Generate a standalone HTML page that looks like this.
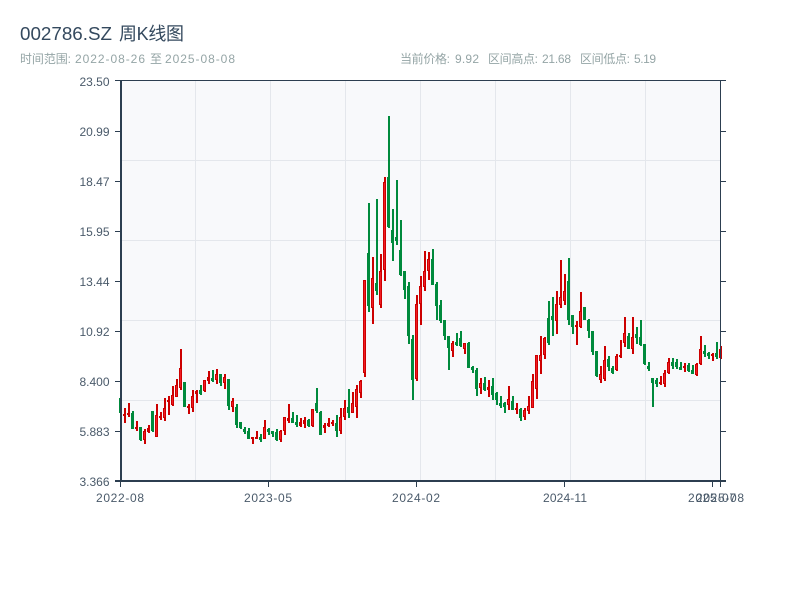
<!DOCTYPE html>
<html><head><meta charset="utf-8"><style>
html,body{margin:0;padding:0;background:#fff;width:800px;height:600px;overflow:hidden}
svg{display:block}
text{font-family:"Liberation Sans","Noto Sans CJK SC",sans-serif}
</style></head><body>
<svg width="800" height="600" viewBox="0 0 800 600" xmlns="http://www.w3.org/2000/svg">
<rect width="800" height="600" fill="#fff"/>
<g font-size="18" fill="#34495e">
<text x="20" y="40" textLength="92" lengthAdjust="spacingAndGlyphs">002786.SZ</text>
<text x="119" y="40" textLength="65">周K线图</text>
</g>
<g font-size="12" fill="#95a5a6">
<text x="20" y="63" textLength="51">时间范围:</text>
<text x="75" y="63" textLength="70">2022-08-26</text>
<text x="150" y="63">至</text>
<text x="165" y="63" textLength="70">2025-08-08</text>
<text x="400" y="63" textLength="50">当前价格:</text>
<text x="455" y="63" textLength="24">9.92</text>
<text x="488" y="63" textLength="50">区间高点:</text>
<text x="542" y="63" textLength="29">21.68</text>
<text x="580" y="63" textLength="50">区间低点:</text>
<text x="634" y="63" textLength="22">5.19</text>
</g>
<rect x="121" y="81" width="600" height="400" fill="#f8f9fb"/>
<g shape-rendering="crispEdges">
<path fill="#e4e7ec" d="M195 81h1v400h-1zM270 81h1v400h-1zM345 81h1v400h-1zM420 81h1v400h-1zM495 81h1v400h-1zM570 81h1v400h-1zM645 81h1v400h-1zM121 160h600v1h-600zM121 240h600v1h-600zM121 320h600v1h-600zM121 400h600v1h-600z"/>
<g fill="none">
<path stroke="#008a3c" stroke-width="2" d="M121 398V413M133 411V429M141 427V441M153 411V432M185 382V407M201 385V395M213 370V382M221 374V386M229 379V410M237 404V428M241 422V429M245 427V434M249 428V439M261 434V442M269 428V435M273 431V437M277 429V441M293 412V423M297 415V427M309 419V427M317 388V413M321 411V435M337 415V437M349 389V418M369 203V312M377 199V295M389 116V228M393 209V261M397 180V245M401 220V276M405 271V299M409 282V344M413 335V400M433 249V285M437 282V320M441 300V323M445 320V340M449 336V370M457 333V346M461 331V347M469 342V368M473 366V373M477 368V396M485 377V391M493 378V400M497 392V405M501 396V408M505 402V413M513 396V410M521 408V421M549 301V345M553 297V336M569 258V325M573 315V334M585 307V320M589 319V338M593 331V355M597 351V377M609 356V371M613 366V374M629 333V349M637 327V344M641 320V346M645 344V365M649 362V371M653 378V407M657 378V387M673 358V369M677 359V369M681 362V370M689 363V372M693 365V374M705 345V357M709 352V359M717 342V359"/>
<path stroke="#008a3c" stroke-width="3" d="M120.5 398V413M132.5 413V429M140.5 427V440M152.5 411V431M184.5 382V407M200.5 390V394M212.5 378V381M220.5 374V383M228.5 379V406M236.5 407V425M240.5 422V428M244.5 429V432M248.5 431V439M260.5 437V440M268.5 429V432M272.5 431V434M276.5 432V440M292.5 418V423M296.5 422V425M308.5 420V426M316.5 403V411M320.5 412V435M336.5 423V431M348.5 407V413M368.5 253V306M376.5 283V291M388.5 177V227M392.5 230V243M396.5 237V241M400.5 250V275M404.5 271V290M408.5 286V336M412.5 339V380M432.5 259V285M436.5 284V306M440.5 305V321M444.5 320V336M448.5 336V348M456.5 342V345M460.5 338V346M468.5 343V368M472.5 367V370M476.5 370V389M484.5 383V390M492.5 386V395M496.5 393V400M500.5 403V406M504.5 403V407M512.5 401V410M520.5 409V418M548.5 318V343M552.5 316V320M568.5 281V320M572.5 315V327M584.5 307V320M588.5 320V331M592.5 331V352M596.5 351V376M608.5 359V367M612.5 368V373M628.5 336V349M636.5 334V338M640.5 337V345M644.5 344V364M648.5 366V369M652.5 378V383M656.5 380V384M672.5 362V366M676.5 362V367M680.5 367V370M688.5 365V371M692.5 370V374M704.5 351V354M708.5 353V356M716.5 353V357"/>
<path stroke="#cc0000" stroke-width="2" d="M125 408V423M129 403V417M137 421V431M145 429V444M149 425V433M157 404V437M161 412V420M165 398V421M169 396V415M173 386V406M177 379V397M181 349V390M189 404V414M193 390V412M197 390V403M205 380V392M209 371V384M217 369V384M225 374V389M233 398V412M253 437V444M257 431V439M265 420V439M281 430V442M285 417V435M289 404V423M301 418V427M305 417V428M313 409V427M325 423V433M329 418V427M333 420V426M341 408V434M345 400V420M353 392V413M357 385V418M361 380V398M365 280V377M373 257V324M381 254V308M385 177V281M417 295V381M421 276V325M425 251V291M429 252V280M453 341V357M465 343V354M481 378V394M489 380V397M509 386V410M517 403V414M525 408V420M529 396V414M533 374V408M537 355V399M541 336V374M545 337V359M557 291V334M561 260V308M565 274V305M577 321V345M581 292V328M601 366V383M605 346V381M617 354V371M621 340V358M625 317V347M633 317V354M661 376V385M665 370V387M669 358V374M685 363V372M697 363V376M701 336V365M713 353V361M721 346V359"/>
<path stroke="#cc0000" stroke-width="3" d="M124.5 414V416M128.5 413V415M136.5 427V429M144.5 431V440M148.5 428V432M156.5 415V437M160.5 416V418M164.5 408V418M168.5 400V402M172.5 395V405M176.5 385V397M180.5 368V388M188.5 406V408M192.5 396V408M196.5 391V394M204.5 380V391M208.5 377V381M216.5 374V380M224.5 377V383M232.5 401V407M252.5 437V439M256.5 437V439M264.5 427V439M280.5 431V440M284.5 417V431M288.5 418V421M300.5 422V426M304.5 420V424M312.5 409V426M324.5 425V428M328.5 423V426M332.5 422V424M340.5 417V431M344.5 408V417M352.5 403V413M356.5 389V407M360.5 381V393M364.5 280V373M372.5 278V308M380.5 271V305M384.5 182V270M416.5 304V379M420.5 286V304M424.5 271V287M428.5 259V271M452.5 343V351M464.5 343V349M480.5 383V388M488.5 387V390M508.5 399V405M516.5 408V410M524.5 410V417M528.5 406V411M532.5 381V408M536.5 355V389M540.5 355V361M544.5 338V355M556.5 304V321M560.5 297V305M564.5 291V301M576.5 325V327M580.5 311V327M600.5 374V380M604.5 360V379M616.5 356V370M620.5 355V357M624.5 333V343M632.5 337V349M660.5 382V384M664.5 373V384M668.5 362V373M684.5 366V368M696.5 364V375M700.5 349V364M712.5 354V356M720.5 349V358"/>
<path stroke="#f01c24" stroke-width="1" d="M144.5 432V439M156.5 416V436M164.5 409V417M172.5 396V404M176.5 386V396M180.5 369V387M192.5 397V407M204.5 381V390M216.5 375V379M224.5 378V382M232.5 402V406M264.5 428V438M280.5 432V439M284.5 418V430M312.5 410V425M340.5 418V430M344.5 409V416M352.5 404V412M356.5 390V406M360.5 382V392M364.5 281V372M372.5 279V307M380.5 272V304M384.5 183V269M416.5 305V378M420.5 287V303M424.5 272V286M428.5 260V270M452.5 344V350M464.5 344V348M480.5 384V387M508.5 400V404M524.5 411V416M528.5 407V410M532.5 382V407M536.5 356V388M540.5 356V360M544.5 339V354M556.5 305V320M560.5 298V304M564.5 292V300M580.5 312V326M600.5 375V379M604.5 361V378M616.5 357V369M624.5 334V342M632.5 338V348M664.5 374V383M668.5 363V372M696.5 365V374M700.5 350V363M720.5 350V357"/>
</g>
<path fill="#2c3e50" d="M115 80h611v1h-611zM120 80h2v402h-2zM720 80h1v402h-1zM115 480h611v2h-611zM115 131h5v1h-5zM115 181h5v1h-5zM115 231h5v1h-5zM115 281h5v1h-5zM115 331h5v1h-5zM115 381h5v1h-5zM115 431h5v1h-5zM721 131h5v1h-5zM721 181h5v1h-5zM721 231h5v1h-5zM721 281h5v1h-5zM721 331h5v1h-5zM721 381h5v1h-5zM721 431h5v1h-5zM120 482h1v5h-1zM268 482h1v5h-1zM416 482h1v5h-1zM564 482h1v5h-1zM712 482h1v5h-1zM720 482h1v5h-1z"/>
</g>
<g font-size="12" fill="#4a5a6a" text-anchor="end">
<text x="109.5" y="86">23.50</text>
<text x="109.5" y="136">20.99</text>
<text x="109.5" y="186">18.47</text>
<text x="109.5" y="236">15.95</text>
<text x="109.5" y="286">13.44</text>
<text x="109.5" y="336">10.92</text>
<text x="109.5" y="386">8.400</text>
<text x="109.5" y="436">5.883</text>
<text x="109.5" y="486">3.366</text>
</g>
<g font-size="12" fill="#4a5a6a">
<text x="96" y="502" textLength="48">2022-08</text>
<text x="244" y="502" textLength="48">2023-05</text>
<text x="392" y="502" textLength="48">2024-02</text>
<text x="543" y="502" textLength="44">2024-11</text>
<text x="688" y="502" textLength="48">2025-07</text>
<text x="696" y="502" textLength="48">2025-08</text>
</g>
</svg>
</body></html>
